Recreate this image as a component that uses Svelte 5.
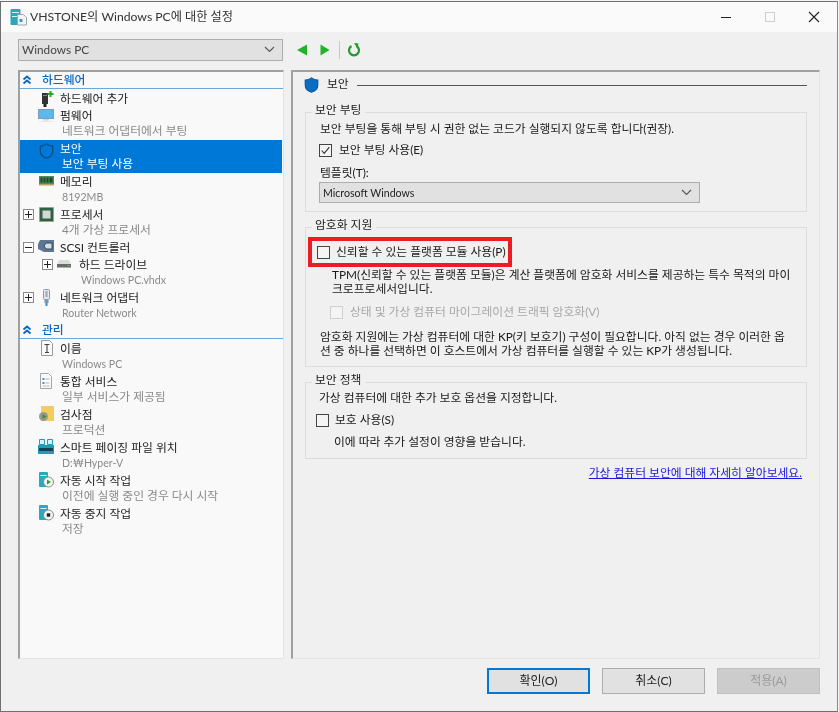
<script>
  const hardware = [
    { icon: 'add', label: '하드웨어 추가', single: true },
    { icon: 'firmware', label: '펌웨어', sub: '네트워크 어댑터에서 부팅' },
    { icon: 'shield', label: '보안', sub: '보안 부팅 사용', selected: true },
    { icon: 'memory', label: '메모리', sub: '8192MB' },
    { icon: 'cpu', label: '프로세서', sub: '4개 가상 프로세서', toggle: '+' },
    { icon: 'scsi', label: 'SCSI 컨트롤러', toggle: '-', single: true },
    { icon: 'disk', label: '하드 드라이브', sub: 'Windows PC.vhdx', toggle: '+', nested: true },
    { icon: 'nic', label: '네트워크 어댑터', sub: 'Router Network', toggle: '+' }
  ];
  const management = [
    { icon: 'name', label: '이름', sub: 'Windows PC' },
    { icon: 'services', label: '통합 서비스', sub: '일부 서비스가 제공됨' },
    { icon: 'checkpoint', label: '검사점', sub: '프로덕션' },
    { icon: 'paging', label: '스마트 페이징 파일 위치', sub: 'D:₩Hyper-V' },
    { icon: 'start', label: '자동 시작 작업', sub: '이전에 실행 중인 경우 다시 시작' },
    { icon: 'stop', label: '자동 중지 작업', sub: '저장' }
  ];

  // latin-only sub lines sit a bit narrower than the hangul ones
  const isLatin = (s) => /^[\x00-\x7f₩]+$/.test(s);
</script>

{#snippet shield(fill, stroke)}
  <svg width="15" height="16" viewBox="0 0 16 18">
    <path d="M8 1 C10 2.600 12.600 3.400 15 3.400 V9 C15 13 12 15.800 8 17 C4 15.800 1 13 1 9 V3.400 C3.400 3.400 6 2.600 8 1 Z" fill={fill} stroke={stroke} stroke-width="1.400"/>
  </svg>
{/snippet}

{#snippet icon(name)}
  {#if name === 'add'}
    <svg width="18" height="18" viewBox="0 0 18 18">
      <rect x="5" y="3" width="6" height="11" fill="#333"/>
      <rect x="6.500" y="14" width="3" height="3" fill="#222"/>
      <rect x="6" y="5" width="4" height="1" fill="#888"/>
      <path d="M10.500 3 h2 v-2 h2 v2 h2 v2 h-2 v2 h-2 v-2 h-2 Z" fill="#2aa52a"/>
    </svg>
  {:else if name === 'firmware'}
    <svg width="18" height="18" viewBox="0 0 18 18">
      <rect x="1.500" y="2.500" width="15" height="9" fill="#5cb8ee" stroke="#7f9db5"/>
      <rect x="6" y="12" width="6" height="1.500" fill="#d4d4d4"/>
      <rect x="2" y="14" width="14" height="1" fill="#e8e8e8"/>
    </svg>
  {:else if name === 'shield'}
    {@render shield('#0078d7', '#0a4a86')}
  {:else if name === 'memory'}
    <svg width="18" height="18" viewBox="0 0 18 18">
      <rect x="2" y="3" width="15" height="8" fill="#4f8a5c"/>
      <path d="M3.500 4.500 h2 v5 h-2 Z M6.500 4.500 h2 v5 h-2 Z M9.500 4.500 h2 v5 h-2 Z M12.500 4.500 h3 v5 h-3 Z" fill="#23452c"/>
      <rect x="2" y="11" width="15" height="1.500" fill="#b7a257"/>
    </svg>
  {:else if name === 'cpu'}
    <svg width="18" height="18" viewBox="0 0 18 18">
      <rect x="2.500" y="1.500" width="14" height="14" fill="#2f6244" stroke="#a89a58" stroke-dasharray="1 1"/>
      <rect x="5.500" y="4.500" width="8" height="8" fill="#d6d6d6"/>
    </svg>
  {:else if name === 'scsi'}
    <svg width="18" height="18" viewBox="0 0 18 18">
      <path d="M3 1 h14 v12 h-10 l-6 -3 v-5 Z" fill="#5d7892"/>
      <path d="M9 4 h6 v6 h-6 l-2 -3 Z" fill="#d8dde2" stroke="#38495b"/>
    </svg>
  {:else if name === 'disk'}
    <svg width="18" height="18" viewBox="0 0 18 18">
      <path d="M3 4 h10 l2 4 v3 h-14 v-3 Z" fill="#dcdcdc"/>
      <rect x="1" y="8" width="14" height="3.500" fill="#6a6a6a"/>
      <rect x="11.500" y="9" width="2" height="1" fill="#53d24c"/>
    </svg>
  {:else if name === 'nic'}
    <svg width="18" height="18" viewBox="0 0 18 18">
      <rect x="6.500" y="0.500" width="6" height="10" rx="1" fill="#e4e8ec" stroke="#8b98a6"/>
      <rect x="8.500" y="2" width="2" height="6" fill="#98a6b3"/>
      <rect x="7.500" y="11" width="4" height="3" fill="#7e97ae"/>
      <rect x="8.500" y="14" width="2" height="3" fill="#2f8fd8"/>
    </svg>
  {:else if name === 'name'}
    <svg width="18" height="18" viewBox="0 0 18 18">
      <path d="M4.500 0.500 h8 l3 3 v12 h-11 Z" fill="#fafafa" stroke="#9a9a9a"/>
      <path d="M7.500 4.500 h5 M10 4.500 v8 M8 12.500 h4" fill="none" stroke="#444" stroke-width="1.100"/>
    </svg>
  {:else if name === 'services'}
    <svg width="18" height="18" viewBox="0 0 18 18">
      <path d="M3.500 0.500 h8 l3 3 v12 h-11 Z" fill="#fafafa" stroke="#a5a5a5"/>
      <path d="M5.500 5 h2 v2 h-2 Z M5.500 9 h2 v2 h-2 Z" fill="#4a90d0"/>
      <path d="M8.500 6 h4 M8.500 10 h4 M5.500 13 h7" stroke="#b8b8b8" fill="none"/>
    </svg>
  {:else if name === 'checkpoint'}
    <svg width="18" height="18" viewBox="0 0 18 18">
      <path d="M4 0 h13 v15 h-13 Z" fill="#f2cd5e"/>
      <circle cx="6.500" cy="10.500" r="4.500" fill="#9a9a8c"/>
      <path d="M5.500 8 l4 2.500 -4 2.500 Z" fill="#3f8f3a"/>
    </svg>
  {:else if name === 'paging'}
    <svg width="18" height="18" viewBox="0 0 18 18">
      <rect x="1" y="6" width="16" height="9" fill="#19a0b8"/>
      <rect x="2" y="9" width="14" height="3" fill="#0e4454"/>
      <path d="M2.500 0.500 h5 v5 h-5 Z M10.500 0.500 h5 v5 h-5 Z" fill="#d8f2f6" stroke="#19a0b8"/>
    </svg>
  {:else if name === 'start' || name === 'stop'}
    <svg width="18" height="18" viewBox="0 0 18 18">
      <rect x="2" y="0" width="9" height="15" rx="1" fill="#29a9bd"/>
      <rect x="3.500" y="3" width="6" height="1" fill="#d8f2f6"/>
      <circle cx="11.500" cy="10" r="5" fill="#f4f4f4" stroke="#8a8a8a"/>
      {#if name === 'start'}
        <path d="M10 7.500 l4 2.500 -4 2.500 Z" fill="#27a827"/>
      {:else}
        <rect x="9.800" y="8.300" width="3.400" height="3.400" fill="#222"/>
      {/if}
    </svg>
  {/if}
{/snippet}

{#snippet row(item)}
  <div class="row" class:selected={item.selected} class:single={item.single} class:nested={item.nested}>
    <div class="toggle-slot">
      {#if item.toggle}
        <span class="toggle">
          <i></i>{#if item.toggle === '+'}<b></b>{/if}
        </span>
      {/if}
    </div>
    <div class="row-icon">{@render icon(item.icon)}</div>
    <div class="row-text">
      <div class="row-label">{item.label}</div>
      {#if item.sub}<div class="row-sub" class:latin={isLatin(item.sub)}>{item.sub}</div>{/if}
    </div>
  </div>
{/snippet}

{#snippet chevrons()}
  <svg width="10" height="10" viewBox="0 0 10 10" fill="none" stroke="#0a66c2" stroke-width="1.800">
    <path d="M1.500 4.500 L5 1.500 L8.500 4.500"/>
    <path d="M1.500 8.500 L5 5.500 L8.500 8.500"/>
  </svg>
{/snippet}

{#snippet caret()}
  <svg width="11" height="7" viewBox="0 0 11 7" fill="none" stroke="#555" stroke-width="1.100">
    <path d="M1 1 L5.500 5.500 L10 1"/>
  </svg>
{/snippet}

<div class="window">
  <header class="titlebar">
    <svg class="app-icon" width="17" height="18" viewBox="0 0 17 18">
      <rect x="0.500" y="1" width="10" height="16" rx="1" fill="#2aa7b8"/>
      <rect x="2" y="4" width="7" height="1" fill="#d8f2f6"/>
      <rect x="2" y="8" width="7" height="1" fill="#d8f2f6"/>
      <path d="M7.500 6.500 h6 l3 3 v7.500 h-9 Z" fill="#f4f4f4" stroke="#9aa"/>
      <rect x="9.500" y="11" width="3" height="3" fill="#4a90d0"/>
    </svg>
    <span class="title">VHSTONE의 Windows PC에 대한 설정</span>
    <div class="caption">
      <svg width="12" height="12" viewBox="0 0 12 12"><path d="M1 6.500 H11" stroke="#222"/></svg>
      <svg width="12" height="12" viewBox="0 0 12 12"><rect x="1.500" y="1.500" width="9" height="9" fill="none" stroke="#cfcfcf"/></svg>
      <svg width="12" height="12" viewBox="0 0 12 12"><path d="M1 1 L11 11 M11 1 L1 11" stroke="#222" stroke-width="1.100"/></svg>
    </div>
  </header>

  <div class="toolbar">
    <div class="combo vm-combo"><span>Windows PC</span>{@render caret()}</div>
    <div class="nav">
      <svg width="10" height="12" viewBox="0 0 10 12"><path d="M10 0.500 V11.500 L0 6 Z" fill="#22b32a"/></svg>
      <svg width="10" height="12" viewBox="0 0 10 12"><path d="M0.500 0.500 V11.500 L9.500 6 Z" fill="#22b32a"/></svg>
      <span class="nav-sep"></span>
      <svg class="refresh" width="14" height="14" viewBox="0 0 14 14">
        <path d="M9.500 3 A5 5 0 1 1 4.500 3" fill="none" stroke="#249b2c" stroke-width="2.200"/>
        <path d="M7 0 L11.500 0.500 L10.500 5.500 Z" fill="#249b2c"/>
      </svg>
    </div>
  </div>

  <div class="main">
    <nav class="tree">
      <div class="section">{@render chevrons()}<span>하드웨어</span></div>
      {#each hardware as item}{@render row(item)}{/each}
      <div class="section">{@render chevrons()}<span>관리</span></div>
      {#each management as item}{@render row(item)}{/each}
    </nav>

    <section class="pane">
      <div class="pane-head">
        {@render shield('#0a6fc4', '#0b5a9e')}
        <span>보안</span>
        <i></i>
      </div>

      <fieldset class="boot">
        <legend>보안 부팅</legend>
        <p>보안 부팅을 통해 부팅 시 권한 없는 코드가 실행되지 않도록 합니다(권장).</p>
        <div class="check">
          <span class="box">
            <svg width="11" height="11" viewBox="0 0 13 13"><path d="M2 6.500 L5 10 L11 2.500" fill="none" stroke="#333" stroke-width="1.300"/></svg>
          </span>
          보안 부팅 사용(E)
        </div>
        <div class="template-label">템플릿(T):</div>
        <div class="combo template-combo"><span>Microsoft Windows</span>{@render caret()}</div>
      </fieldset>

      <fieldset class="crypto">
        <legend>암호화 지원</legend>
        <div class="tpm">
          <div class="check"><span class="box"></span>신뢰할 수 있는 플랫폼 모듈 사용(P)</div>
        </div>
        <p class="tpm-note">TPM(신뢰할 수 있는 플랫폼 모듈)은 계산 플랫폼에 암호화 서비스를 제공하는 특수 목적의 마이<br>크로프로세서입니다.</p>
        <div class="check disabled"><span class="box"></span>상태 및 가상 컴퓨터 마이그레이션 트래픽 암호화(V)</div>
        <p class="kp">암호화 지원에는 가상 컴퓨터에 대한 KP(키 보호기) 구성이 필요합니다. 아직 없는 경우 이러한 옵<br>션 중 하나를 선택하면 이 호스트에서 가상 컴퓨터를 실행할 수 있는 KP가 생성됩니다.</p>
      </fieldset>

      <fieldset class="policy">
        <legend>보안 정책</legend>
        <p class="policy-intro">가상 컴퓨터에 대한 추가 보호 옵션을 지정합니다.</p>
        <div class="check"><span class="box"></span>보호 사용(S)</div>
        <p class="policy-note">이에 따라 추가 설정이 영향을 받습니다.</p>
      </fieldset>

      <div class="link-row"><span class="link">가상 컴퓨터 보안에 대해 자세히 알아보세요.</span></div>
    </section>
  </div>

  <footer class="buttons">
    <button class="default">확인(O)</button>
    <button>취소(C)</button>
    <button disabled>적용(A)</button>
  </footer>
</div>

<style>
  :global(body) {
    background: #f4f4f4;
  }
  .window {
    box-sizing: border-box;
    width: 838px;
    height: 711px;
    margin-top: 1px;
    border: 1px solid #707070;
    border-right-color: #8a8a8a;
    background: #f0f0f0;
    display: flex;
    flex-direction: column;
    font-family: Lato, "Noto Sans CJK KR", sans-serif;
    font-size: 11.8px;
    line-height: 16px;
    color: #1a1a1a;
    overflow: hidden;
    filter: blur(0.3px);
  }
  .titlebar {
    height: 30px;
    flex: none;
    background: #fafafa;
    display: flex;
    align-items: center;
    padding-left: 9px;
  }
  .app-icon { margin-right: 3px; }
  .title { font-size: 12.2px; color: #333; }
  .caption {
    margin-left: auto;
    display: flex;
    gap: 32px;
    padding-right: 17px;
  }

  .toolbar {
    flex: none;
    height: 38px;
    display: flex;
    align-items: center;
    padding: 0 0 3px 17px;
    box-sizing: border-box;
  }
  .combo {
    box-sizing: border-box;
    display: flex;
    align-items: center;
    justify-content: space-between;
    background: #e1e1e1;
    border: 1px solid #adadad;
    padding: 0 7px 0 3px;
    color: #222;
  }
  .vm-combo {
    width: 265px;
    height: 22px;
    color: #444;
  }
  .nav {
    display: flex;
    align-items: center;
    margin-left: 14px;
    gap: 13px;
  }
  .nav-sep {
    width: 1px;
    height: 18px;
    background: #c8c8c8;
    margin: 0 -1px 0 -4px;
  }
  .refresh { margin-left: -5px; }

  .main {
    flex: 1;
    display: flex;
    gap: 7px;
    padding-left: 17px;
    min-height: 0;
  }
  .tree, .pane {
    box-sizing: border-box;
    height: 589px;
    border: 1px solid #e4e4e4;
    border-top: 2px solid #a0a0a0;
    border-left: 2px solid #a0a0a0;
  }
  .tree {
    width: 266px;
    background: #f9f9f9;
  }
  .section {
    height: 16px;
    display: flex;
    align-items: center;
    gap: 10px;
    padding-left: 2px;
    margin-bottom: 1px;
    border-bottom: 1px solid #6aa8dc;
    color: #0a66c2;
    font-weight: 500;
  }
  .row {
    display: flex;
    height: 33px;
    white-space: nowrap;
  }
  .row.single { height: 17px; }
  .toggle-slot {
    width: 17px;
    flex: none;
    padding-left: 3px;
    box-sizing: border-box;
    padding-top: 2px;
  }
  .nested { padding-left: 19px; }
  .toggle {
    position: relative;
    display: block;
    width: 9px;
    height: 9px;
    border: 1px solid #8a8a8a;
    background: #fff;
    margin-top: 1px;
  }
  .toggle i {
    position: absolute;
    left: 1px;
    right: 1px;
    top: 4px;
    height: 1px;
    background: #222;
  }
  .toggle b {
    position: absolute;
    top: 1px;
    bottom: 1px;
    left: 4px;
    width: 1px;
    background: #222;
  }
  .row-icon {
    width: 20px;
    flex: none;
    height: 18px;
  }
  .row-text { padding-left: 3px; }
  .row-label {
    height: 15px;
    margin-top: 1px;
    color: #222;
  }
  .row-sub {
    height: 16px;
    padding-left: 2px;
    color: #8a8a8a;
  }
  .row-sub.latin { font-size: 10.6px; }
  .row.selected {
    background: #0078d7;
    margin-right: 1px;
  }
  .row.selected .row-icon {
    box-sizing: border-box;
    padding: 3px 0 0 2px;
  }
  .row.selected .row-label,
  .row.selected .row-sub { color: #fff; }

  .pane {
    width: 529px;
    background: #f0f0f0;
    padding: 3px 12px 0 11px;
  }
  .pane-head {
    display: flex;
    align-items: center;
    height: 20px;
    gap: 8px;
    margin-bottom: 8px;
  }
  .pane-head span { margin-top: -2px; }
  .pane-head i {
    flex: 1;
    height: 1px;
    background: #555;
  }

  fieldset {
    margin: 0 0 0 1px;
    padding: 0 4px;
    border: 1px solid #dcdcdc;
    box-sizing: border-box;
    min-width: 0;
    white-space: nowrap;
  }
  legend {
    padding: 0 4px 4px 3px;
    margin-left: 2px;
    line-height: 14px;
  }
  p { margin: 0; }
  .boot { height: 109px; }
  .boot p { margin-left: 10px; }
  .check {
    display: flex;
    align-items: center;
    gap: 7px;
  }
  .box {
    width: 11px;
    height: 11px;
    border: 1px solid #444;
    background: #f4f4f4;
    display: flex;
    align-items: center;
    justify-content: center;
    flex: none;
  }
  .boot .check { margin: 5px 0 0 9px; }
  .template-label { margin: 7px 0 0 10px; }
  .template-combo {
    width: 381px;
    height: 21px;
    margin: 1px 0 0 9px;
    font-size: 10.6px;
  }
  .crypto {
    height: 149px;
    margin-top: 6px;
  }
  .tpm {
    width: 204px;
    height: 30px;
    box-sizing: border-box;
    border: 4px solid #ed1c24;
    display: flex;
    align-items: center;
    padding-left: 5px;
    margin: 1px 0 0 -2px;
  }
  .tpm .check { gap: 6px; }
  .tpm-note {
    margin: 1px 0 0 22px;
    line-height: 14px;
  }
  .check.disabled { color: #a8a8a8; margin: 8px 0 0 20px; }
  .check.disabled .box { border-color: #cfcfcf; }
  .kp {
    margin: 10px 0 0 10px;
    line-height: 14px;
  }
  .policy {
    height: 86px;
    margin-top: 6px;
  }
  .policy-intro {
    margin-left: 9px;
    line-height: 14px;
  }
  .policy .check { margin: 7px 0 0 6px; gap: 6px; }
  .policy-note { margin: 6px 0 0 24px; }
  .link-row {
    display: flex;
    justify-content: flex-end;
    margin-top: 6px;
    padding-right: 5px;
  }
  .link {
    color: #1a1ad6;
    text-decoration: underline;
  }

  .buttons {
    flex: none;
    height: 43px;
    display: flex;
    justify-content: flex-end;
    gap: 12px;
    padding-right: 17px;
    margin-top: auto;
  }
  button {
    width: 103px;
    height: 26px;
    box-sizing: border-box;
    background: #e1e1e1;
    border: 1px solid #adadad;
    font: inherit;
    font-size: 12px;
    color: #222;
    padding: 0;
  }
  button.default {
    border: 2px solid #0078d7;
  }
  button:disabled {
    background: #cccccc;
    border-color: #bfbfbf;
    color: #9a9a9a;
  }
</style>
